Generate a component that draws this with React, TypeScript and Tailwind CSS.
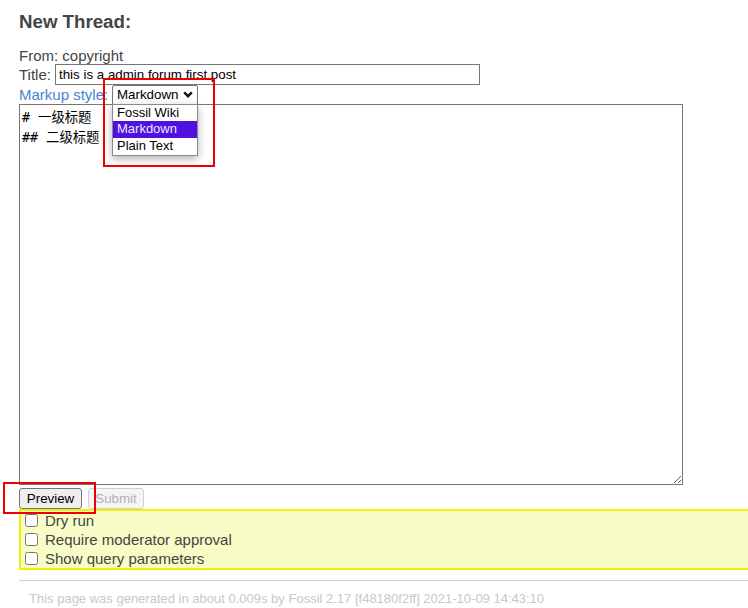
import React from "react";

/* checkbox options under the editor */
const OPTIONS = ["Dry run", "Require moderator approval", "Show query parameters"];

/* markup styles in the open select popup */
const MARKUPS = ["Fossil Wiki", "Markdown", "Plain Text"];

const App: React.FC = () => {
  return (
    <div className="relative w-[748px] h-[608px] overflow-hidden bg-white text-[#444] font-['Liberation_Sans',Arial,sans-serif]">
      <div className="w-[780px] pl-[19px] pt-[11px]">
        <h1 className="text-[18.7px] leading-[22px] font-bold text-[#444]">New Thread:</h1>

        <div className="mt-[14px] text-[15px] leading-[17px]">From: copyright</div>

        {/* TITLE */}
        <div className="flex items-center h-[21px] text-[15px] leading-[17px]">
          <span className="w-[36px]">Title:</span>
          <div className="w-[425px] h-[21px] border border-[#767676] pl-[3px] text-[13.33px] leading-[19px] text-black">
            this is a admin forum first post
          </div>
        </div>

        {/* MARKUP STYLE */}
        <div className="flex items-center h-[19px]">
          <span className="w-[93px] shrink-0 whitespace-nowrap text-[15px] leading-[17px] text-[#4b7fd3]">Markup style:</span>
          <div className="relative">
            <div className="flex items-center justify-between w-[86px] h-[20px] border border-[#767676] rounded-[2px] pl-[4px] pr-[4px] text-[13.33px] leading-[18px] text-black bg-white">
              <span>Markdown</span>
              <svg width="10" height="7" viewBox="0 0 10 7">
                <polyline points="1.2,1.4 5,5.2 8.8,1.4" fill="none" stroke="#111" strokeWidth="2.4" />
              </svg>
            </div>
            {/* open popup */}
            <div className="absolute left-0 top-[19px] z-10 w-[86px] border border-[#8a8a8a] bg-white pb-[1px] shadow-[0_3px_8px_rgba(0,0,0,0.3)] text-[13px] text-black">
              {MARKUPS.map((m) => (
                <div
                  key={m}
                  className={
                    m === "Markdown"
                      ? "h-[16.5px] leading-[16.5px] pl-[4px] bg-[#5010e0] text-[#e8e8ff]"
                      : "h-[16.5px] leading-[16.5px] pl-[4px]"
                  }
                >
                  {m}
                </div>
              ))}
            </div>
          </div>
        </div>

        {/* EDITOR */}
        <textarea
          readOnly
          value={"# 一级标题\n## 二级标题"}
          className="block w-[664px] h-[381px] border border-[#767676] px-[2px] pt-[3px] text-[13.33px] leading-[20px] text-black outline-none font-['DejaVu_Sans_Mono','Noto_Sans_CJK_SC',monospace]"
        />

        {/* BUTTONS */}
        <div className="flex gap-[6px] mt-[3px]">
          <button className="w-[63px] h-[21px] border border-[#767676] rounded-[3px] bg-[#efefef] text-[13.33px] text-black">
            Preview
          </button>
          <button
            disabled
            className="w-[56px] h-[21px] border border-[#d0d0d0] rounded-[3px] bg-[#f5f5f5] text-[13.33px] text-[#b0b0b0]"
          >
            Submit
          </button>
        </div>

        {/* OPTIONS */}
        <div className="w-[740px] border-2 border-[#f0f000] bg-[#f8fcc6] flex flex-col">
          {OPTIONS.map((o) => (
            <label key={o} className="flex items-center h-[19px] text-[15px] leading-[17px]">
              <input type="checkbox" className="ml-[4px] mr-[7px] w-[13px] h-[13px]" />
              {o}
            </label>
          ))}
        </div>

        <div className="mt-[10px] w-[740px] border-t border-[#cfcfcf]" />

        <div className="mt-[10px] pl-[10px] text-[13px] leading-[15px] text-[#c8c8c8]">
          This page was generated in about 0.009s by Fossil 2.17 [f48180f2ff] 2021-10-09 14:43:10
        </div>
      </div>

      {/* annotation boxes */}
      <div className="absolute left-[103px] top-[78px] w-[112px] h-[89px] border-2 border-[#ee0000] z-20" />
      <div className="absolute left-[3px] top-[482px] w-[93px] h-[32px] border-2 border-[#ee0000] z-20" />
    </div>
  );
};

export default App;
